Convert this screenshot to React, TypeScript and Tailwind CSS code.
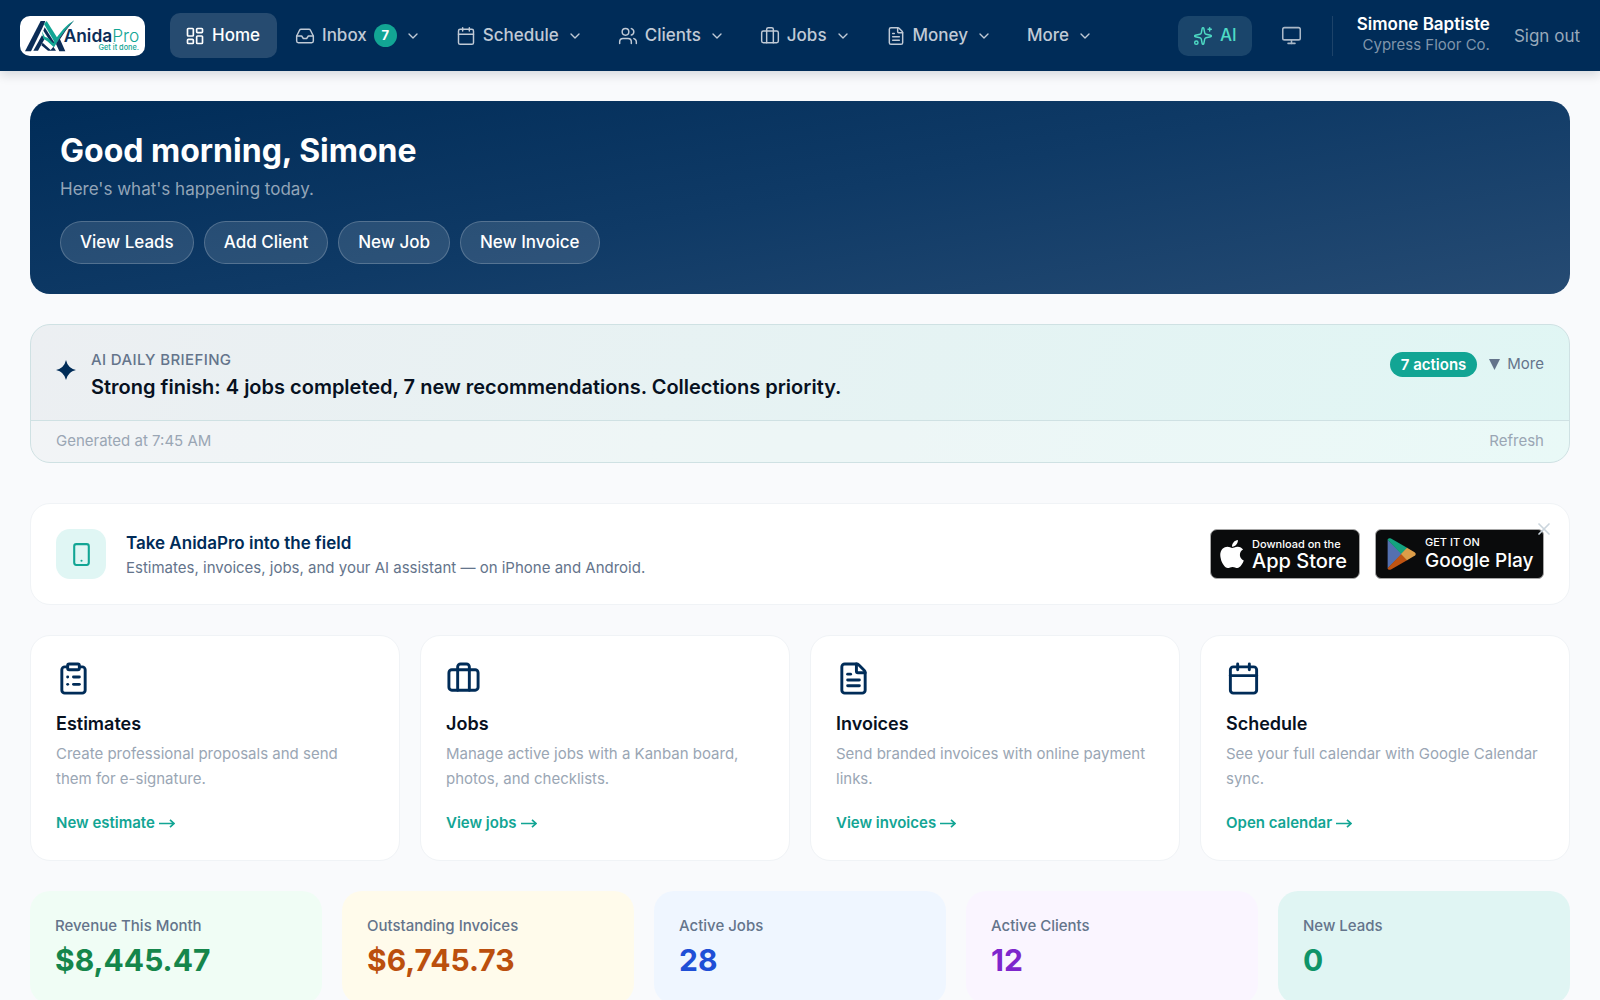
import {
  Briefcase,
  Calendar,
  ChevronDown,
  ClipboardList,
  FileText,
  Inbox,
  LayoutDashboard,
  Monitor,
  Smartphone,
  Sparkles,
  Users,
  X,
  type LucideIcon,
} from "lucide-react";
import { FaApple } from "react-icons/fa";

interface NavItem {
  label: string;
  icon?: LucideIcon;
  badge?: number;
}

interface QuickCard {
  title: string;
  text: string;
  link: string;
  icon: LucideIcon;
}

interface Stat {
  label: string;
  value: string;
  box: string;
  color: string;
}

const navItems: NavItem[] = [
  { label: "Inbox", icon: Inbox, badge: 7 },
  { label: "Schedule", icon: Calendar },
  { label: "Clients", icon: Users },
  { label: "Jobs", icon: Briefcase },
  { label: "Money", icon: FileText },
  { label: "More" },
];

const quickActions = ["View Leads", "Add Client", "New Job", "New Invoice"];

const cards: QuickCard[] = [
  { title: "Estimates", text: "Create professional proposals and send them for e-signature.", link: "New estimate", icon: ClipboardList },
  { title: "Jobs", text: "Manage active jobs with a Kanban board, photos, and checklists.", link: "View jobs", icon: Briefcase },
  { title: "Invoices", text: "Send branded invoices with online payment links.", link: "View invoices", icon: FileText },
  { title: "Schedule", text: "See your full calendar with Google Calendar sync.", link: "Open calendar", icon: Calendar },
];

const stats: Stat[] = [
  { label: "Revenue This Month", value: "$8,445.47", box: "bg-[#f0fdf5]", color: "text-[#15864b]" },
  { label: "Outstanding Invoices", value: "$6,745.73", box: "bg-[#fffbeb]", color: "text-[#bb4f0d]" },
  { label: "Active Jobs", value: "28", box: "bg-[#eff6ff]", color: "text-[#1f4fd6]" },
  { label: "Active Clients", value: "12", box: "bg-[#faf5ff]", color: "text-[#7e26cc]" },
  { label: "New Leads", value: "0", box: "bg-[#e0f5f3]", color: "text-[#0f9468]" },
];

function Logo() {
  return (
    <svg viewBox="0 0 375 120" className="w-[125px] h-[40px] rounded-[10px] bg-white" role="img" aria-label="AnidaPro">
      {/* A with a check mark running through it */}
      <path d="M15 106 L62 15 H76 L70 30 L33 106 Z" fill="#0b2d57" />
      <path d="M80 15 L116 72 L107 84 L72 24 Z" fill="#12a594" />
      <path d="M74 34 L106 84 L100 90 L70 44 Z" fill="#0b2d57" />
      <path d="M40 104 L66 58 L74 68 L54 104 Z" fill="#0b2d57" />
      <path d="M68 80 L92 102 L100 92 L108 104 H84 L64 88 Z" fill="#0b2d57" />
      <path d="M66 46 L74 62 L84 66 L100 82 Q128 32 163 13 Q130 46 102 94 L82 76 L70 68 Z" fill="#12a594" />
      <path d="M163 13 Q138 40 120 70 L136 106 H118 L108 84 Q132 42 163 13Z" fill="#0b2d57" />
      <text x="131" y="77" fontSize="52" fontWeight="600" fill="#0b2d57">
        Anida<tspan fontWeight="300" fill="#12a594">Pro</tspan>
      </text>
      <text x="357" y="103" fontSize="22" fontWeight="500" fill="#12a594" textAnchor="end">Get it done.</text>
    </svg>
  );
}

function Nav() {
  return (
    <header className="flex items-center h-[71px] px-5 bg-[#002c58] shadow-[0_4px_10px_rgba(0,20,40,0.14)]">
      <a href="#" className="shrink-0">
        <Logo />
      </a>
      <nav className="flex items-center gap-[3px] ml-[25px]">
        <a href="#" aria-current="page" className="flex items-center gap-[7px] h-[45px] pl-[15px] pr-[17px] rounded-[10px] bg-[#264b70] text-white font-medium">
          <LayoutDashboard size={20} strokeWidth={2} />
          Home
        </a>
        {navItems.map(({ label, icon: Icon, badge }) => (
          <button key={label} className="flex items-center gap-[7px] h-[45px] pl-[15px] pr-[17px] text-[#c0cad6] font-medium">
            {Icon && <Icon size={20} strokeWidth={1.75} />}
            {label}
            {badge && (
              <span className="flex items-center justify-center w-[23px] h-[23px] rounded-full bg-[#12a594] text-white text-[13px] font-bold">
                {badge}
              </span>
            )}
            <ChevronDown size={16} strokeWidth={2} className="ml-px" />
          </button>
        ))}
      </nav>
      <div className="flex items-center ml-auto">
        <button className="flex items-center gap-[7px] h-10 px-[15px] rounded-[10px] bg-[#1a456b] text-[#4edbc5] font-medium">
          <Sparkles size={20} strokeWidth={1.75} />
          AI
        </button>
        <button aria-label="Display" className="flex items-center justify-center w-10 h-10 ml-5 text-[#aab8c7]">
          <Monitor size={21} strokeWidth={1.75} />
        </button>
        <div className="w-px h-10 ml-5 bg-[#1d4369]" />
        <div className="ml-6 pb-1 text-right">
          <p className="leading-[22px] font-semibold text-white">Simone Baptiste</p>
          <p className="text-[15px] leading-5 text-[#7f95ab]">Cypress Floor Co.</p>
        </div>
        <a href="#" className="ml-6 pt-[2px] text-[#99a9ba]">Sign out</a>
      </div>
    </header>
  );
}

function Hero() {
  return (
    <section className="p-[30px] rounded-[20px] bg-[linear-gradient(170deg,#002c58_0%,#0f3a66_50%,#264b73_100%)]">
      <h1 className="text-[32px] leading-10 font-bold text-white">Good morning, Simone</h1>
      <p className="mt-[5px] leading-[26px] text-[#93a5b8]">Here's what's happening today.</p>
      <div className="flex gap-[10px] mt-[19px]">
        {quickActions.map((label) => (
          <button key={label} className="h-[43px] px-[19px] rounded-full border border-white/20 bg-white/12 text-white font-medium">
            {label}
          </button>
        ))}
      </div>
    </section>
  );
}

function Briefing() {
  return (
    <section className="mt-[30px] rounded-[20px] border border-[#cfe1e3] overflow-hidden bg-[linear-gradient(110deg,#eceff2_0%,#e0f6f4_100%)]">
      <div className="flex items-start h-[95px] px-[25px] pt-[25px]">
        <svg viewBox="0 0 20 20" className="w-5 h-5 mt-[10px] text-[#002c58]" fill="currentColor" aria-hidden="true">
          <path d="M10 0 Q11.8 8.2 20 10 Q11.8 11.8 10 20 Q8.2 11.8 0 10 Q8.2 8.2 10 0Z" />
        </svg>
        <div className="ml-[15px]">
          <p className="text-[15px] leading-5 font-medium tracking-wide text-[#64748b]">AI DAILY BRIEFING</p>
          <h2 className="mt-[2px] text-[20px] leading-[30px] font-semibold text-[#07111f]">
            Strong finish: 4 jobs completed, 7 new recommendations. Collections priority.
          </h2>
        </div>
        <div className="flex items-center gap-3 ml-auto mt-[2px]">
          <span className="h-[25px] px-[11px] rounded-full bg-[#12a594] text-[15px] leading-[25px] font-semibold text-white">7 actions</span>
          <button className="flex items-center gap-[7px] text-[15px] text-[#64748b]">
            <svg viewBox="0 0 11 11" className="w-[11px] h-[11px]" fill="currentColor" aria-hidden="true">
              <path d="M0 0H11L5.5 11Z" />
            </svg>
            More
          </button>
        </div>
      </div>
      <div className="flex items-center justify-between h-[42px] px-[25px] border-t border-[#cfe1e3] bg-white/30 text-[15px] text-[#9aa6b4]">
        <span>Generated at 7:45 AM</span>
        <button>Refresh</button>
      </div>
    </section>
  );
}

function AppStoreBadge() {
  return (
    <a href="#" className="flex items-center gap-2 w-[150px] h-[50px] pl-[9px] rounded-[7px] border border-[#a6a6a6] bg-[#0a0b0c] text-white">
      <FaApple className="w-6 h-8 shrink-0" aria-hidden="true" />
      <span className="flex flex-col whitespace-nowrap">
        <span className="text-[11px] leading-[14px] font-medium">Download on the</span>
        <span className="text-[20px] leading-5 font-medium">App Store</span>
      </span>
    </a>
  );
}

function GooglePlayBadge() {
  return (
    <a href="#" className="flex items-center gap-[9px] w-[169px] h-[50px] pl-[11px] rounded-[6px] border border-[#a6a6a6] bg-[#0a0b0c] text-white">
      <svg viewBox="0 0 29 32" className="w-[29px] h-8" aria-hidden="true">
        <path d="M.6 1.5V30.5L15 16Z" fill="#5470b0" />
        <path d="M.6 1.8C1 .2 2.5-.3 4 .6L20.5 10 14.5 16.2Z" fill="#14a37f" />
        <path d="M.6 30.2C1 31.8 2.5 32.3 4 31.4L20.5 22 14.5 15.8Z" fill="#bf5412" />
        <path d="M20 9.7L27.2 13.9C29.2 15 29.2 17 27.2 18.1L20 22.3 14 16Z" fill="#dc9d48" />
      </svg>
      <span className="flex flex-col pb-[2px] whitespace-nowrap">
        <span className="text-[11px] leading-[14px] font-medium">GET IT ON</span>
        <span className="text-[19px] leading-[23px] font-medium">Google Play</span>
      </span>
    </a>
  );
}

function AppPromo() {
  return (
    <section className="relative flex items-center mt-10 p-[25px] rounded-[20px] border border-[#f0f3f6] bg-white">
      <div className="flex items-center justify-center w-[50px] h-[50px] rounded-[14px] bg-[#e0f6f4] text-[#12a594]">
        <Smartphone size={25} strokeWidth={2} />
      </div>
      <div className="ml-5">
        <h2 className="leading-[26px] font-semibold text-[#002c58]">Take AnidaPro into the field</h2>
        <p className="text-[15px] leading-[23px] text-[#64748b]">Estimates, invoices, jobs, and your AI assistant — on iPhone and Android.</p>
      </div>
      <div className="flex gap-[15px] ml-auto">
        <AppStoreBadge />
        <GooglePlayBadge />
      </div>
      <button aria-label="Dismiss" className="absolute top-[15px] right-[15px] text-[#cbd5dd]">
        <X size={20} strokeWidth={2} />
      </button>
    </section>
  );
}

export default function App() {
  return (
    <div className="min-h-screen bg-[#f9fafc] font-['Inter',sans-serif] text-[17px]">
      <Nav />
      <main className="p-[30px]">
        <Hero />
        <Briefing />
        <AppPromo />

        <div className="grid grid-cols-4 gap-5 mt-[30px]">
          {cards.map(({ title, text, link, icon: Icon }) => (
            <article key={title} className="p-[25px] rounded-[20px] border border-[#f0f3f6] bg-white">
              <Icon size={35} strokeWidth={2} className="text-[#002c58]" />
              <h3 className="mt-[15px] text-[18px] leading-[26px] font-semibold text-[#07111f]">{title}</h3>
              <p className="mt-1 text-[15px] leading-[25px] text-[#9aa6b4]">{text}</p>
              <a href="#" className="flex items-center gap-1 mt-5 text-[15px] leading-6 font-semibold text-[#12a594]">
                {link}
                <svg viewBox="0 0 16 9" className="w-4 h-[9px]" fill="none" stroke="currentColor" strokeWidth="1.7" aria-hidden="true">
                  <path d="M0 4.5H15M11 .8L15 4.5L11 8.2" />
                </svg>
              </a>
            </article>
          ))}
        </div>

        <div className="grid grid-cols-5 gap-5 mt-[30px]">
          {stats.map((s) => (
            <div key={s.label} className={`p-[25px] rounded-[20px] ${s.box}`}>
              <p className="text-[15px] leading-5 font-medium text-[#64748b]">{s.label}</p>
              <p className={`mt-[5px] text-[30px] leading-[38px] font-bold ${s.color}`}>{s.value}</p>
            </div>
          ))}
        </div>
      </main>
    </div>
  );
}
